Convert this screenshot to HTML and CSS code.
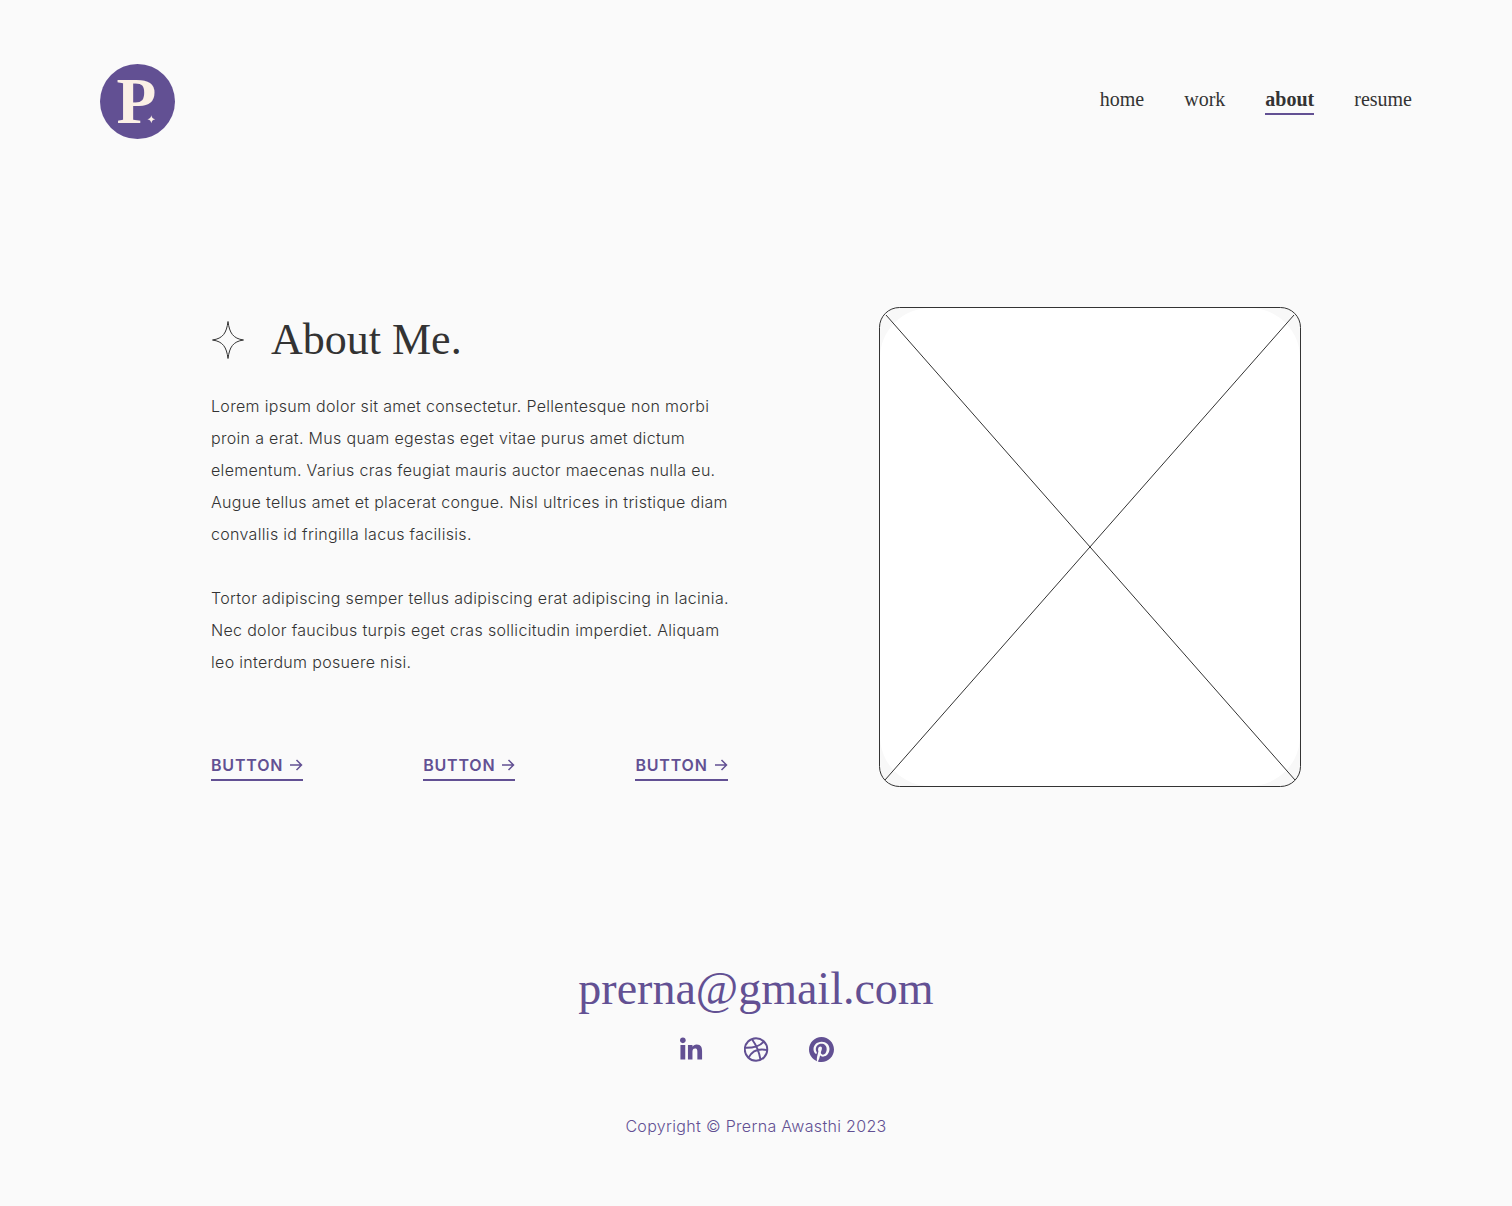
FILE: index.html
```html
<!DOCTYPE html>
<html lang="en">
<head>
<meta charset="utf-8">
<meta name="viewport" content="width=device-width, initial-scale=1">
<title>About Me</title>
<link rel="stylesheet" href="styles.css">
</head>
<body>
<header class="header">
  <a class="logo" href="#" aria-label="Home">
    <svg class="logo-mark" viewBox="0 0 76 76">
      <circle class="logo-disc" cx="38" cy="38" r="38"/>
      <text class="logo-letter" x="37" y="60" text-anchor="middle">P</text>
      <path class="logo-star" d="M52 52Q52.500 55.500 56 56Q52.500 56.500 52 60Q51.500 56.500 48 56Q51.500 55.500 52 52Z"/>
    </svg>
  </a>
  <nav class="nav">
    <a class="nav-link" href="#">home</a>
    <a class="nav-link" href="#">work</a>
    <a class="nav-link nav-link-active" href="#" aria-current="page">about</a>
    <a class="nav-link" href="#">resume</a>
  </nav>
</header>

<main class="about">
  <section class="about-text">
    <h1 class="title">
      <svg class="title-star" viewBox="0 0 34 40" aria-hidden="true"><path d="M17 1.500C18.500 13 22 18.500 32.500 20C22 21.500 18.500 27 17 38.500C15.500 27 12 21.500 1.500 20C12 18.500 15.500 13 17 1.500Z"/></svg>
      About Me.
    </h1>
    <div class="copy">
      <p>Lorem ipsum dolor sit amet consectetur. Pellentesque non morbi proin a erat. Mus quam egestas eget vitae purus amet dictum elementum. Varius cras feugiat mauris auctor maecenas nulla eu. Augue tellus amet et placerat congue. Nisl ultrices in tristique diam convallis id fringilla lacus facilisis.</p>
      <p>Tortor adipiscing semper tellus adipiscing erat adipiscing in lacinia. Nec dolor faucibus turpis eget cras sollicitudin imperdiet. Aliquam leo interdum posuere nisi.</p>
    </div>
    <div class="actions">
      <button class="action" type="button">BUTTON <svg class="arrow" viewBox="0 0 14 14" aria-hidden="true"><path d="M1 7H12M7.500 2L12.500 7L7.500 12"/></svg></button>
      <button class="action" type="button">BUTTON <svg class="arrow" viewBox="0 0 14 14" aria-hidden="true"><path d="M1 7H12M7.500 2L12.500 7L7.500 12"/></svg></button>
      <button class="action" type="button">BUTTON <svg class="arrow" viewBox="0 0 14 14" aria-hidden="true"><path d="M1 7H12M7.500 2L12.500 7L7.500 12"/></svg></button>
    </div>
  </section>
  <svg class="photo" viewBox="0 0 422 480" role="img" aria-label="Photo placeholder">
    <rect class="photo-frame" x="0.500" y="0.500" width="421" height="479" rx="20"/>
    <rect class="photo-fill" x="1" y="1" width="420" height="478" rx="50"/>
    <path class="photo-line" d="M7 8L416 473M415 8L6 473"/>
  </svg>
</main>

<footer class="footer">
  <a class="email" href="mailto:prerna@gmail.com">prerna@gmail.com</a>
  <div class="social">
    <a class="social-link" href="#" aria-label="LinkedIn"><svg viewBox="0 0 26 26"><circle cx="4" cy="3.500" r="2.900"/><path d="M1.500 8.200H6.500V23.500H1.500ZM9.300 8.200H14V10.200C14.700 8.900 16.200 7.700 18.400 7.700C23 7.700 24 10.900 24 14.900V23.500H19.100V15.800C19.100 14.100 19.100 12 16.800 12C14.400 12 14 13.800 14 15.700V23.500H9.300Z"/></svg></a>
    <a class="social-link social-link-outline" href="#" aria-label="Dribbble"><svg viewBox="0 0 26 26"><circle cx="12.500" cy="13" r="11.700"/><path d="M8.300 2.300C12.500 8 15.800 15 17.200 23.800M1.200 11.200C9.500 11.400 16.500 9.500 20.500 4.700M4.800 21.300C8.500 14.500 15 11.600 24.200 13.700"/></svg></a>
    <a class="social-link" href="#" aria-label="Pinterest"><svg viewBox="0 0 24 24"><path d="M12 0C5.373 0 0 5.372 0 12c0 5.084 3.163 9.426 7.627 11.174-.105-.949-.2-2.405.042-3.441.218-.937 1.407-5.965 1.407-5.965s-.359-.719-.359-1.782c0-1.668.967-2.914 2.171-2.914 1.023 0 1.518.769 1.518 1.690 0 1.029-.655 2.568-.994 3.995-.283 1.194.599 2.169 1.777 2.169 2.133 0 3.772-2.249 3.772-5.495 0-2.873-2.064-4.882-5.012-4.882-3.414 0-5.418 2.561-5.418 5.207 0 1.031.397 2.138.893 2.738a.36.36 0 0 1 .083.345l-.333 1.360c-.053.220-.174.267-.402.161-1.499-.698-2.436-2.889-2.436-4.649 0-3.785 2.750-7.262 7.929-7.262 4.163 0 7.398 2.967 7.398 6.931 0 4.136-2.607 7.464-6.227 7.464-1.216 0-2.359-.631-2.750-1.378l-.748 2.853c-.271 1.043-1.002 2.350-1.492 3.146C9.570 23.812 10.763 24 12 24c6.627 0 12-5.373 12-12 0-6.628-5.373-12-12-12z"/></svg></a>
  </div>
  <p class="copyright">Copyright © Prerna Awasthi 2023</p>
</footer>
</body>
</html>
```
FILE: styles.css
```css
:root {
  --ink: #333333;
  --accent: #625093;
  --paper: #fafafa;
  --serif: "Liberation Serif", serif;
}

* {
  box-sizing: border-box;
}

body {
  margin: 0;
  background: var(--paper);
  color: var(--ink);
  font: 300 16px/32px Inter, sans-serif;
  letter-spacing: 0.02em;
}

a {
  color: inherit;
  text-decoration: none;
}

svg {
  display: block;
}

.header {
  display: flex;
  justify-content: space-between;
  align-items: center;
  padding: 64px 100px 0;
}

.logo-mark {
  width: 75px;
  height: 75px;
}

.logo-disc {
  fill: var(--accent);
}

.logo-letter {
  fill: #fbf0e6;
  font: 700 66px var(--serif);
  letter-spacing: 0;
}

.logo-star {
  fill: #fbf0e6;
}

.nav {
  display: flex;
  gap: 40px;
  margin-bottom: 4px;
  font: 400 20px/28px var(--serif);
  letter-spacing: 0;
}

.nav-link {
  border-bottom: 2px solid transparent;
}

.nav-link-active {
  border-color: var(--accent);
  font-weight: 700;
}

.about {
  display: grid;
  grid-template-columns: minmax(0, 525px) minmax(0, 422px);
  justify-content: space-between;
  padding: 168px 211px 0;
}

.title {
  display: flex;
  align-items: center;
  gap: 26px;
  margin: 7px 0 24px;
  font: 400 44px/52px var(--serif);
  letter-spacing: 0;
}

.title-star {
  width: 34px;
  height: 40px;
  fill: none;
  stroke: var(--ink);
}

.copy p {
  margin: 0 0 32px;
}

.actions {
  display: flex;
  gap: 120px;
  margin-top: 75px;
}

.action {
  display: flex;
  align-items: center;
  gap: 6px;
  padding: 0 0 2px;
  border: 0;
  border-bottom: 2px solid var(--accent);
  background: none;
  color: var(--accent);
  font: 600 16px/24px Inter, sans-serif;
  letter-spacing: 0.05em;
  cursor: pointer;
}

.arrow {
  width: 14px;
  height: 14px;
  fill: none;
  stroke: currentColor;
  stroke-width: 1.500;
}

.photo {
  width: 100%;
}

.photo-frame {
  fill: #f8f8f8;
  stroke: var(--ink);
}

.photo-fill {
  fill: #ffffff;
}

.photo-line {
  fill: none;
  stroke: var(--ink);
}

.footer {
  display: flex;
  flex-direction: column;
  align-items: center;
  padding: 174px 24px 64px;
  color: var(--accent);
}

.email {
  font: 400 46px/56px var(--serif);
  letter-spacing: 0;
}

.social {
  display: flex;
  gap: 40px;
  margin: 20px 0 48px;
}

.social-link svg {
  width: 25px;
  height: 25px;
  fill: currentColor;
}

.social-link-outline svg {
  fill: none;
  stroke: currentColor;
  stroke-width: 2;
}

.copyright {
  margin: 0;
}
```
